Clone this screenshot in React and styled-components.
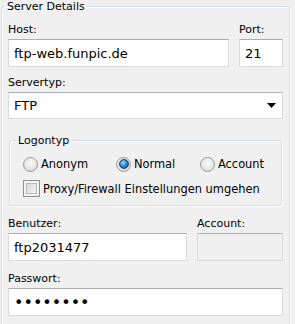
import React from 'react';
import styled, { createGlobalStyle } from 'styled-components';

const GlobalStyle = createGlobalStyle`
  html, body {
    margin: 0;
    padding: 0;
    background: #f0f0f0;
  }
  body {
    font-family: "DejaVu Sans", Tahoma, sans-serif;
    font-size: 11px;
    color: #000;
  }
`

const Page = styled.div`
  width: 295px;
  height: 324px;
  overflow: hidden;
  padding: 0 0 0 1px;
  box-sizing: border-box;
`

const GroupBox = styled.fieldset`
  margin: ${({inner}) => inner ? '15px 1px 0' : '0'};
  padding: ${({inner}) => inner ? '9px 10px 8px 13px' : '10px 6px 40px 6px'};
  width: ${({inner}) => inner ? 'auto' : '289px'};
  box-sizing: border-box;
  border: 1px solid #d5dfe5;
  border-radius: 3px;
  box-shadow: inset 1px 1px 0 #fff, 1px 1px 0 #fff;
  min-width: 0;
`

const Legend = styled.legend`
  padding: 0 1px;
  margin-left: ${({inner}) => inner ? '-6px' : '-2px'};
  font-size: 11px;
  line-height: 13px;
`

const Row = styled.div`
  display: grid;
  grid-template-columns: ${({side}) => side ? `1fr ${side}px` : '1fr'};
  column-gap: 10px;
  margin-top: ${({gap}) => `${gap}px`};
`

const Field = styled.div`
  display: flex;
  flex-direction: column;
  min-width: 0;
`

const Label = styled.label`
  font-size: 11px;
  line-height: 13px;
  height: 13px;
  margin-bottom: 3px;
  white-space: nowrap;
`

const TextBox = styled.input`
  box-sizing: border-box;
  width: 100%;
  height: 28px;
  margin: 0;
  padding: 0 5px;
  font-family: "DejaVu Sans", Tahoma, sans-serif;
  font-size: ${({secret}) => secret ? '16px' : '13px'};
  color: #000;
  background: ${({disabled}) => disabled ? '#f0f0f0' : '#fff'};
  border: 1px solid #d9dbe0;
  border-top-color: #abadb3;
  border-radius: 0;
  outline: none;
`

const Combo = styled.div`
  box-sizing: border-box;
  height: 27px;
  display: flex;
  align-items: center;
  justify-content: space-between;
  padding: 0 6px 0 5px;
  font-size: 13px;
  background: #fff;
  border: 1px solid #d9dbe0;
  border-top-color: #abadb3;
`

const OptionRow = styled.div`
  display: flex;
  align-items: center;
  height: ${({tall}) => tall ? '17px' : '16px'};
  margin-top: ${({first}) => first ? '0' : '8px'};
`

const Choice = styled.label`
  display: flex;
  align-items: center;
  gap: 3px;
  width: ${({w}) => w ? `${w}px` : 'auto'};
  white-space: nowrap;
  font-family: "DejaVu Sans Condensed", "DejaVu Sans", Tahoma, sans-serif;
  font-size: 12.7px;
  line-height: 16px;
`

const Radio = styled.span`
  box-sizing: border-box;
  width: 15px;
  height: 15px;
  border-radius: 50%;
  border: 1px solid #9a9a9a;
  background: radial-gradient(circle at 50% 40%, #fbfbfb 0%, #e6e6e6 55%, #cfcfcf 100%);
  display: flex;
  align-items: center;
  justify-content: center;
  flex: none;

  &::after {
    content: '';
    display: ${({checked}) => checked ? 'block' : 'none'};
    width: 8px;
    height: 8px;
    border-radius: 50%;
    background: radial-gradient(circle at 40% 35%, #a9e4ff 0%, #2a8fd0 45%, #0b3f75 100%);
    border: 1px solid #1f3e66;
  }
`

const Check = styled.span`
  box-sizing: border-box;
  width: 17px;
  height: 17px;
  border: 1px solid #8e8f8f;
  background: linear-gradient(135deg, #cfcfcf 0%, #e9e9e9 55%, #f6f6f6 100%);
  box-shadow: inset 0 0 0 2px #f4f4f4, inset 0 0 0 3px #b9b9b9;
  flex: none;
`

const Arrow = () => (
  <svg width="9" height="5" viewBox="0 0 9 5">
    <path d="M0 0 L9 0 L4.5 5 Z" fill="#000" />
  </svg>
)

export default function App() {
  return (
    <Page>
      <GlobalStyle />
      <GroupBox>
        <Legend>Server Details</Legend>
        <Row gap={0} side={44}>
          <Field>
            <Label>Host:</Label>
            <TextBox readOnly defaultValue="ftp-web.funpic.de" />
          </Field>
          <Field>
            <Label>Port:</Label>
            <TextBox readOnly defaultValue="21" />
          </Field>
        </Row>
        <Row gap={9}>
          <Field>
            <Label>Servertyp:</Label>
            <Combo>
              <span>FTP</span>
              <Arrow />
            </Combo>
          </Field>
        </Row>
        <GroupBox inner>
          <Legend inner>Logontyp</Legend>
          <OptionRow first>
            <Choice w={93}><Radio />Anonym</Choice>
            <Choice w={84}><Radio checked />Normal</Choice>
            <Choice><Radio />Account</Choice>
          </OptionRow>
          <OptionRow tall>
            <Choice><Check />Proxy/Firewall Einstellungen umgehen</Choice>
          </OptionRow>
        </GroupBox>
        <Row gap={11} side={86}>
          <Field>
            <Label>Benutzer:</Label>
            <TextBox readOnly defaultValue="ftp2031477" />
          </Field>
          <Field>
            <Label>Account:</Label>
            <TextBox disabled defaultValue="" />
          </Field>
        </Row>
        <Row gap={11}>
          <Field>
            <Label>Passwort:</Label>
            <TextBox secret type="password" readOnly defaultValue="password" />
          </Field>
        </Row>
      </GroupBox>
    </Page>
  );
}
